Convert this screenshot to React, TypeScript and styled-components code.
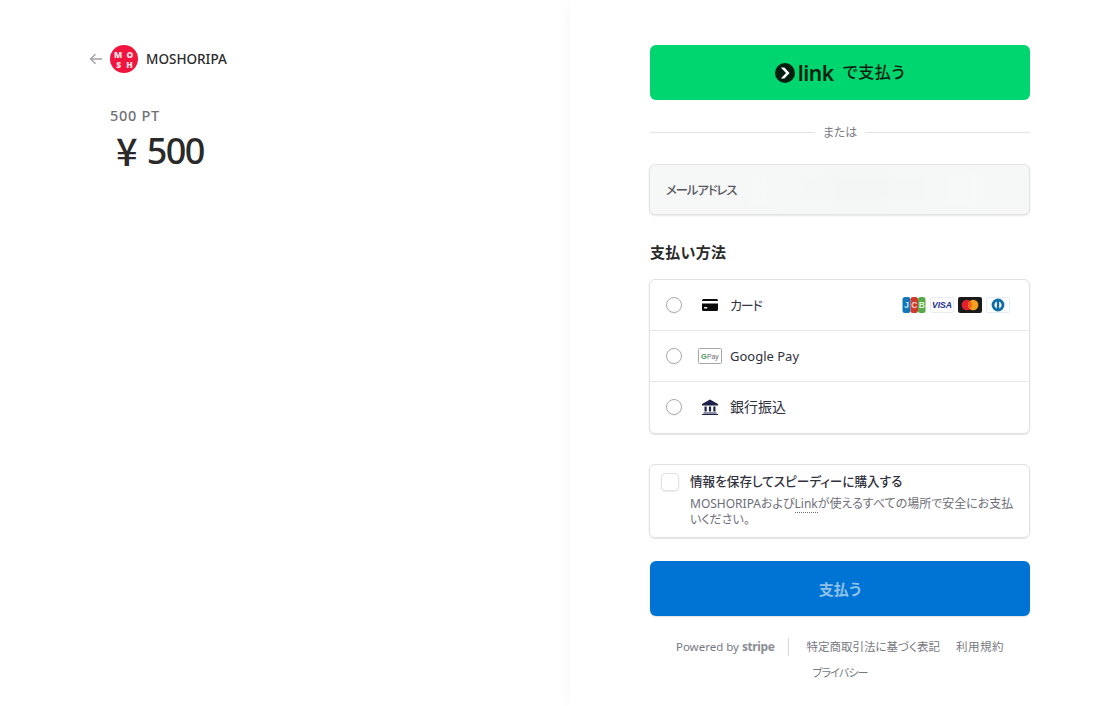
import React from "react";
import styled, { createGlobalStyle } from "styled-components";

const Global = createGlobalStyle`
  html, body { margin: 0; padding: 0; background: #fff; }
  body { font-family: "Noto Sans", "Noto Sans CJK JP", sans-serif; color: #1a1a1a; font-feature-settings: "palt"; }
  * { box-sizing: border-box; }
`;
const Page = styled.div`
  display: flex;
  width: 1111px;
  height: 706px;
  overflow: hidden;
`;
const Summary = styled.section`
  width: 570px;
  flex: none;
  padding: 44px 0 0 89px;
`;
const Header = styled.header`
  display: flex;
  align-items: center;
  height: 29px;
`;
const BackIcon = styled.svg`
  width: 14px;
  height: 12px;
  margin-right: 7px;
`;
const Logo = styled.svg`
  width: 28px;
  height: 28px;
  margin-right: 8px;
`;
const Merchant = styled.span`
  font-size: 13.5px;
  font-weight: 500;
  color: #2b2b2b;
`;
const Product = styled.div`
  margin: 32px 0 0 21px;
  font-size: 14.5px;
  line-height: 20px;
  font-weight: 500;
  letter-spacing: 0.7px;
  color: #6f7076;
`;
const Price = styled.div`
  margin: 8px 0 0 27px;
  font-size: 36px;
  line-height: 36px;
  color: #2a2a2a;
  font-weight: 500;
  display: flex;
  align-items: center;
  gap: 9px;
`;
const Yen = styled.span`
  font-family: "Noto Sans CJK JP", sans-serif;
  font-size: 38px;
  font-weight: 500;
  margin-top: -3px;
`;
const Amount = styled.span`
  letter-spacing: -1.5px;
`;
const Checkout = styled.main`
  flex: 1;
  padding: 45px 0 0 80px;
  box-shadow: -6px 0 14px -6px rgba(0, 0, 0, 0.05);
  background: #fff;
`;
const Column = styled.div`
  width: 380px;
  display: flex;
  flex-direction: column;
`;
const LinkButton = styled.div`
  height: 55px;
  border-radius: 6px;
  background: #00d66f;
  display: flex;
  align-items: center;
  justify-content: center;
  color: #011e0f;
`;
const LinkMark = styled.svg`
  width: 20px;
  height: 20px;
  margin-right: 3px;
`;
const LinkWord = styled.span`
  font-size: 21px;
  font-weight: 600;
  line-height: 28px;
  letter-spacing: -0.4px;
  margin-right: 9px;
`;
const LinkSuffix = styled.span`
  font-size: 16px;
  font-weight: 500;
  letter-spacing: 0.6px;
  margin-top: -3px;
`;
const Divider = styled.div`
  height: 20px;
  margin-top: 22px;
  display: flex;
  align-items: center;
  gap: 8px;
  font-size: 12px;
  color: #7b7c85;
  &::before, &::after {
    content: "";
    flex: 1;
    height: 1px;
    background: #e4e4e6;
  }
`;
const EmailField = styled.div`
  position: relative;
  width: 381px;
  height: 51px;
  margin: 22px 0 0 -1px;
  border: 1px solid #e3e3e5;
  border-radius: 6px;
  background: #f6f7f7;
  box-shadow: 0 1px 2px rgba(0, 0, 0, 0.1);
  display: flex;
  align-items: center;
  padding-left: 16px;
  font-size: 12.3px;
  letter-spacing: -1px;
  font-weight: 500;
  color: #55565d;
  overflow: hidden;
`;
const EmailBlur = styled.span`
  position: absolute;
  left: 100px;
  right: 48px;
  top: 8px;
  bottom: 8px;
  background: linear-gradient(90deg, #f7f8f8, #f4f6f5 45%, #f5f7f6 70%, #f8f9f9);
  filter: blur(4px);
`;
const SectionTitle = styled.h2`
  margin: 26px 0 0;
  font-size: 15px;
  line-height: 22px;
  font-weight: 600;
  letter-spacing: 0.3px;
  color: #2a2a2a;
`;
const MethodList = styled.div`
  width: 381px;
  margin: 16px 0 0 -1px;
  border: 1px solid #e0e0e2;
  border-radius: 6px;
  box-shadow: 0 1px 2px rgba(0, 0, 0, 0.1);
  background: #fff;
`;
const MethodRow = styled.div`
  height: 51px;
  display: flex;
  align-items: center;
  padding-left: 16px;
  padding-right: 19px;
  font-size: 13px;
  color: #30313d;
  &:first-child { height: 50px; }
  & + & { border-top: 1px solid #e6e6e8; }
  &:last-child { height: 52px; padding-bottom: 1px; }
`;
const Radio = styled.span`
  width: 16px;
  height: 16px;
  border-radius: 50%;
  border: 1px solid #a8a9ae;
  box-shadow: 0 1px 1px rgba(0, 0, 0, 0.06);
  flex: none;
`;
const MethodIcon = styled.span`
  width: 24px;
  margin-left: 16px;
  margin-right: 8px;
  flex: none;
  display: flex;
  align-items: center;
  justify-content: center;
`;
const MethodLabel = styled.span`
  flex: 1;
`;
const CardLabel = styled(MethodLabel)`
  margin-top: -1px;
  letter-spacing: -1.2px;
`;
const BankLabel = styled(MethodLabel)`
  margin-top: -2px;
  font-size: 14px;
`;
const Brands = styled.span`
  display: flex;
  gap: 4px;
  align-items: center;
`;
const SaveCard = styled.div`
  width: 381px;
  height: 74px;
  margin: 30px 0 0 -1px;
  border: 1px solid #e0e0e2;
  border-radius: 6px;
  box-shadow: 0 1px 2px rgba(0, 0, 0, 0.1);
  padding: 8px 14px 0 11px;
  display: flex;
`;
const CheckBox = styled.span`
  width: 18px;
  height: 18px;
  border: 1px solid #e0e0e2;
  border-radius: 4px;
  box-shadow: 0 1px 2px rgba(0, 0, 0, 0.08);
  flex: none;
  margin-right: 11px;
`;
const SaveText = styled.div`
  min-width: 0;
`;
const SaveTitle = styled.div`
  font-size: 12.6px;
  line-height: 18px;
  font-weight: 500;
  color: #30313d;
`;
const SaveBody = styled.div`
  margin-top: 5px;
  font-size: 12px;
  line-height: 16px;
  color: #6d6e78;
`;
const Underlined = styled.span`
  border-bottom: 1px dotted #6d6e78;
`;
const PayButton = styled.div`
  height: 55px;
  margin-top: 23px;
  border-radius: 6px;
  background: #0074d4;
  box-shadow: 0 1px 2px rgba(0, 0, 0, 0.12);
  display: flex;
  align-items: center;
  justify-content: center;
  font-size: 15px;
  font-weight: 600;
  color: #8fc1ea;
`;
const Footer = styled.footer`
  margin-top: 21px;
  display: flex;
  flex-wrap: wrap;
  justify-content: center;
  align-items: center;
  font-size: 11.5px;
  line-height: 20px;
  color: #77787f;
`;
const Powered = styled.span`
  display: flex;
  align-items: center;
  gap: 3px;
  padding-right: 14px;
  border-right: 1px solid #d8d8da;
  height: 18px;
  margin-right: 17px;
`;
const StripeWord = styled.b`
  font-size: 12px;
  font-weight: 700;
  letter-spacing: -0.4px;
  color: #8d8e94;
`;
const FooterLink = styled.span``;
const WideLink = styled.span`
  margin-left: 16px;
  letter-spacing: 0.5px;
`;
const TightLink = styled.span`
  font-size: 11px;
  letter-spacing: -0.9px;
`;
const FooterBreak = styled.span`
  flex-basis: 100%;
  height: 6px;
`;

const Jcb = () => (
  <svg width="24" height="16" viewBox="0 0 24 16">
    <rect x="0.5" y="0" width="8" height="16" rx="2.5" fill="#1077b8" />
    <rect x="8.5" y="0" width="7.5" height="16" rx="2.5" fill="#cf3a2b" />
    <rect x="16" y="0" width="7.5" height="16" rx="2.5" fill="#57a94a" />
    <text x="4.5" y="11.2" fontSize="8.5" fontWeight="700" fill="#cfe6f4" textAnchor="middle" fontFamily="Liberation Sans">J</text>
    <text x="12.3" y="11.2" fontSize="8.5" fontWeight="700" fill="#f7d6d1" textAnchor="middle" fontFamily="Liberation Sans">C</text>
    <text x="19.8" y="11.2" fontSize="8.5" fontWeight="700" fill="#e0f2dc" textAnchor="middle" fontFamily="Liberation Sans">B</text>
  </svg>
);
const Visa = () => (
  <svg width="24" height="16" viewBox="0 0 24 16">
    <rect x="0.5" y="0.5" width="23" height="15" rx="1.5" fill="#fff" stroke="#e7ebf2" />
    <text x="12" y="11.4" fontSize="8.6" fontWeight="700" fontStyle="italic" fill="#1a2b8f" textAnchor="middle" fontFamily="Liberation Sans">VISA</text>
  </svg>
);
const Master = () => (
  <svg width="24" height="16" viewBox="0 0 24 16">
    <rect width="24" height="16" rx="2" fill="#1a1a1a" />
    <circle cx="8.8" cy="8" r="5.2" fill="#e4202c" />
    <circle cx="15.2" cy="8" r="5.2" fill="#f59e1f" />
    <path d="M12 3.9a5.2 5.2 0 0 1 0 8.2a5.2 5.2 0 0 1 0-8.2z" fill="#f2641f" />
  </svg>
);
const Diners = () => (
  <svg width="24" height="16" viewBox="0 0 24 16">
    <rect x="0.5" y="0.5" width="23" height="15" rx="1.5" fill="#fff" stroke="#e4edf5" />
    <circle cx="12" cy="8" r="6.4" fill="#0f6ea8" />
    <path d="M10.8 4.4a3.9 3.9 0 0 0 0 7.2zM13.2 4.4a3.9 3.9 0 0 1 0 7.2z" fill="#fff" />
  </svg>
);

export default function App() {
  return (
    <Page>
      <Global />
      <Summary>
        <Header>
          <BackIcon viewBox="0 0 14 12">
            <path d="M13 6H2M6.5 1.2 1.6 6l4.9 4.8" fill="none" stroke="#a3a4a9" strokeWidth="1.5" />
          </BackIcon>
          <Logo viewBox="0 0 28 28">
            <circle cx="14" cy="14" r="14" fill="#f0153f" />
            <text x="8.2" y="12.6" fontSize="8.5" fontWeight="900" fill="#fde3e7" textAnchor="middle" fontFamily="Noto Sans">M</text>
            <text x="20" y="12.6" fontSize="8.5" fontWeight="900" fill="#fde3e7" textAnchor="middle" fontFamily="Noto Sans">O</text>
            <text x="8.8" y="22.6" fontSize="8.5" fontWeight="900" fill="#fde3e7" textAnchor="middle" fontFamily="Noto Sans">S</text>
            <text x="19.4" y="22.6" fontSize="8.5" fontWeight="900" fill="#fde3e7" textAnchor="middle" fontFamily="Noto Sans">H</text>
          </Logo>
          <Merchant>MOSHORIPA</Merchant>
        </Header>
        <Product>500 PT</Product>
        <Price>
          <Yen>¥</Yen>
          <Amount>500</Amount>
        </Price>
      </Summary>
      <Checkout>
        <Column>
          <LinkButton>
            <LinkMark viewBox="0 0 20 20">
              <circle cx="10" cy="10" r="10" fill="#011e0f" />
              <path d="M5.8 4.6 11 10l-5.2 5.4h3.6L14.6 10 9.4 4.6z" fill="#fff" />
            </LinkMark>
            <LinkWord>link</LinkWord>
            <LinkSuffix>で支払う</LinkSuffix>
          </LinkButton>
          <Divider>または</Divider>
          <EmailField>
            メールアドレス
            <EmailBlur />
          </EmailField>
          <SectionTitle>支払い方法</SectionTitle>
          <MethodList>
            <MethodRow>
              <Radio />
              <MethodIcon>
                <svg width="16" height="12" viewBox="0 0 16 12">
                  <path d="M0 1.5A1.5 1.5 0 0 1 1.5 0h13A1.5 1.5 0 0 1 16 1.5V2H0zM0 4.6h16v5.9a1.5 1.5 0 0 1-1.5 1.5h-13A1.5 1.5 0 0 1 0 10.5z" fill="#0b0b0b" />
                  <rect x="2.2" y="8" width="3" height="1.5" fill="#fff" />
                </svg>
              </MethodIcon>
              <CardLabel>カード</CardLabel>
              <Brands>
                <Jcb />
                <Visa />
                <Master />
                <Diners />
              </Brands>
            </MethodRow>
            <MethodRow>
              <Radio />
              <MethodIcon>
                <svg width="24" height="16" viewBox="0 0 24 16">
                  <rect x="0.5" y="0.5" width="23" height="15" rx="1" fill="#fff" stroke="#a3a5a8" />
                  <text x="3" y="10.8" fontSize="7.5" fontWeight="700" fill="#3f9a5a" fontFamily="Liberation Sans">G</text>
                  <text x="9" y="10.6" fontSize="6.8" fill="#6a6c70" fontFamily="Liberation Sans">Pay</text>
                </svg>
              </MethodIcon>
              <MethodLabel>Google Pay</MethodLabel>
            </MethodRow>
            <MethodRow>
              <Radio />
              <MethodIcon>
                <svg width="16" height="16" viewBox="0 0 16 16">
                  <path d="M8 0.5 0 5v1.4h16V5zM1.5 13.4h13v1.1h-13zM0 15h16v1H0zM2.5 7.4h2.2v5H2.5zM6.9 7.4h2.2v5H6.9zM11.3 7.4h2.2v5h-2.2z" fill="#1e2048" />
                </svg>
              </MethodIcon>
              <BankLabel>銀行振込</BankLabel>
            </MethodRow>
          </MethodList>
          <SaveCard>
            <CheckBox />
            <SaveText>
              <SaveTitle>情報を保存してスピーディーに購入する</SaveTitle>
              <SaveBody>
                MOSHORIPAおよび<Underlined>Link</Underlined>が使えるすべての場所で安全にお支払いください。
              </SaveBody>
            </SaveText>
          </SaveCard>
          <PayButton>支払う</PayButton>
          <Footer>
            <Powered>
              Powered by <StripeWord>stripe</StripeWord>
            </Powered>
            <FooterLink>特定商取引法に基づく表記</FooterLink>
            <WideLink>利用規約</WideLink>
            <FooterBreak />
            <TightLink>プライバシー</TightLink>
          </Footer>
        </Column>
      </Checkout>
    </Page>
  );
}
